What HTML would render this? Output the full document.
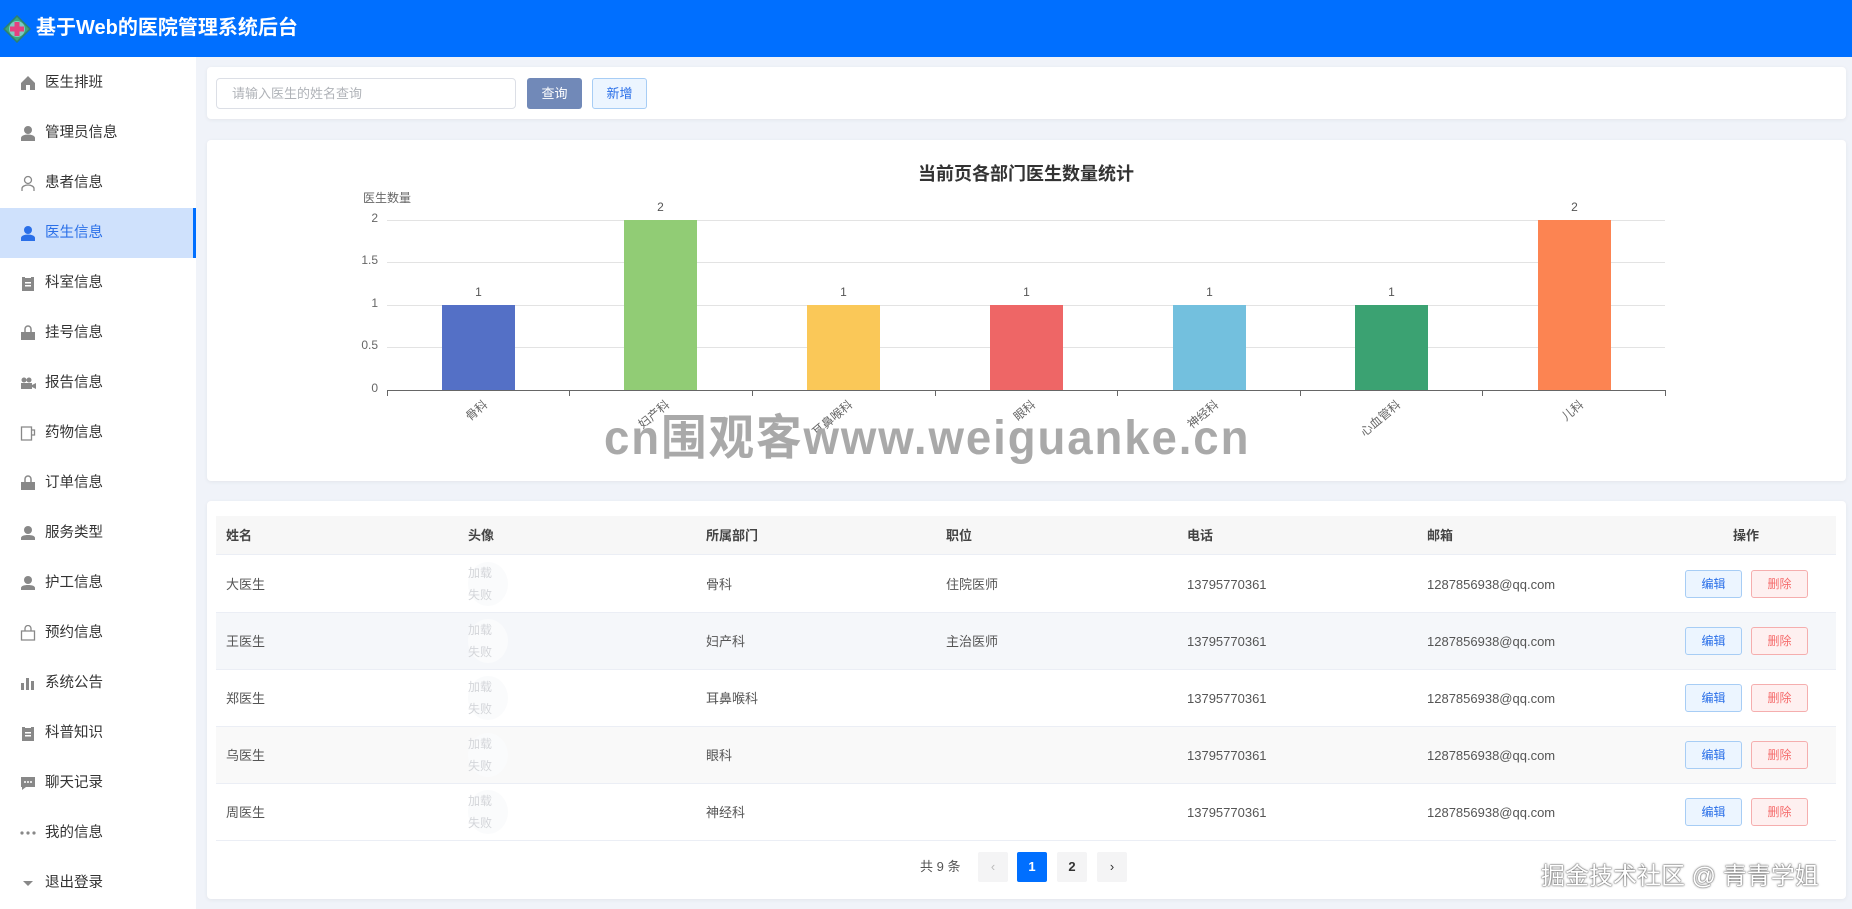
<!DOCTYPE html>
<html><head><meta charset="utf-8"><style>
*{margin:0;padding:0;box-sizing:border-box}
body{width:1852px;height:909px;overflow:hidden;background:#f0f3f9;font-family:"Liberation Sans","Noto Sans CJK SC",sans-serif;position:relative;color:#606266}
.a{position:absolute}
.hd{left:0;top:0;width:1852px;height:57px;background:#006fff}
.hd .t{left:36px;top:12px;color:#fff;font-size:20px;font-weight:bold;line-height:32px}
.sb{left:0;top:57px;width:196px;height:852px;background:#fff}
.mi{position:absolute;left:0;width:196px;height:50px;font-size:14.5px;color:#333;line-height:50px;padding-left:45px}
.mi svg{position:absolute;left:20px;top:17px}
.mi.on{background:#cfe1fc;color:#2a6fe8;border-right:3px solid #006fff}
.card{background:#fff;border-radius:4px;box-shadow:0 1px 4px rgba(0,0,0,.06)}
.btn{position:absolute;border-radius:3px;font-size:13px;text-align:center}
.gl{position:absolute;left:387px;width:1278px;height:1px;background:#e3e3e3}
.yl{position:absolute;width:30px;left:348px;text-align:right;font-size:12px;color:#666}
.bar{position:absolute;width:73px}
.bv{position:absolute;width:73px;text-align:center;font-size:12px;color:#555}
.xl{position:absolute;top:396px;font-size:12px;color:#666;transform:rotate(-40deg);transform-origin:right top;text-align:right;white-space:nowrap}
.th{position:absolute;top:516px;height:39px;line-height:39px;font-size:13px;color:#444;font-weight:bold}
.row{position:absolute;left:216px;width:1620px;height:57px;border-bottom:1px solid #ebeef5}
.c{position:absolute;font-size:13px;color:#555;line-height:57px;top:0}
.av{position:absolute;left:252px;top:6px;width:40px;height:44px;border-radius:50%;background:#fafbfc;color:#d4d6da;font-size:12px;line-height:22px}
.eb{position:absolute;top:14px;width:57px;height:28px;line-height:26px;font-size:12px;border-radius:3px;text-align:center}
.pg{position:absolute;top:852px;height:30px;width:30px;line-height:30px;text-align:center;font-size:13px;background:#f4f4f5;border-radius:2px;color:#333;font-weight:bold}
</style></head><body>
<div class="a hd">
<svg class="a" style="left:3px;top:15px" width="28" height="28" viewBox="0 0 28 28"><path d="M14 1 L27 14 L14 27 L1 14Z" fill="#3aa57a" stroke="#2d7f70" stroke-width="1.5"/><circle cx="14" cy="14" r="8" fill="#7ec9c4"/><path d="M11.5 7h5v4.5h4.5v5h-4.5v4.5h-5v-4.5h-4.5v-5h4.5z" fill="#e5407f"/></svg>
<div class="a t">基于Web的医院管理系统后台</div></div>
<div class="a sb">
<div class="mi" style="top:1px"><svg width="16" height="16" viewBox="0 0 16 16"><path d="M8 1L1 8v7h5v-5h4v5h5V8z" fill="#888"/></svg>医生排班</div>
<div class="mi" style="top:51px"><svg width="16" height="16" viewBox="0 0 16 16"><circle cx="8" cy="5" r="4" fill="#888"/><path d="M1 16v-3c0-2 3-3.5 7-3.5s7 1.5 7 3.5v3z" fill="#888"/></svg>管理员信息</div>
<div class="mi" style="top:101px"><svg width="16" height="16" viewBox="0 0 16 16" fill="none" stroke="#888" stroke-width="1.3"><circle cx="8" cy="5" r="3.5"/><path d="M2 16v-2.5c0-2 3-3.5 6-3.5s6 1.5 6 3.5V16"/></svg>患者信息</div>
<div class="mi on" style="top:151px"><svg width="16" height="16" viewBox="0 0 16 16"><circle cx="8" cy="5" r="4" fill="#2a6fe8"/><path d="M1 16v-3c0-2 3-3.5 7-3.5s7 1.5 7 3.5v3z" fill="#2a6fe8"/></svg>医生信息</div>
<div class="mi" style="top:201px"><svg width="16" height="16" viewBox="0 0 16 16"><path d="M2 2h12v14H2z" fill="#888"/><path d="M5 0h6v3H5z M5 7h6v1.5H5z M5 10h6v1.5H5z" fill="#fff"/></svg>科室信息</div>
<div class="mi" style="top:251px"><svg width="16" height="16" viewBox="0 0 16 16"><path d="M1 7h14v8H1z" fill="#888"/><path d="M5 7V4a3 3 0 0 1 6 0v3" stroke="#888" stroke-width="1.5" fill="none"/></svg>挂号信息</div>
<div class="mi" style="top:301px"><svg width="16" height="16" viewBox="0 0 16 16"><path d="M1 8h11v6H1zM12 10l4-2v6l-4-2z" fill="#888"/><circle cx="4" cy="5" r="2.5" fill="#888"/><circle cx="9" cy="5" r="2.5" fill="#888"/></svg>报告信息</div>
<div class="mi" style="top:351px"><svg width="16" height="16" viewBox="0 0 16 16" fill="none" stroke="#888" stroke-width="1.3"><path d="M1.5 2h10v13h-10zM11.5 5h3v5h-3"/></svg>药物信息</div>
<div class="mi" style="top:401px"><svg width="16" height="16" viewBox="0 0 16 16"><path d="M1 7h14v8H1z" fill="#888"/><path d="M5 7V4a3 3 0 0 1 6 0v3" stroke="#888" stroke-width="1.5" fill="none"/></svg>订单信息</div>
<div class="mi" style="top:451px"><svg width="16" height="16" viewBox="0 0 16 16"><circle cx="8" cy="5" r="4" fill="#888"/><path d="M1 15v-2c0-2 3-3 7-3s7 1 7 3v2z" fill="#888"/></svg>服务类型</div>
<div class="mi" style="top:501px"><svg width="16" height="16" viewBox="0 0 16 16"><circle cx="8" cy="5" r="4" fill="#888"/><path d="M1 15v-2c0-2 3-3 7-3s7 1 7 3v2z" fill="#888"/></svg>护工信息</div>
<div class="mi" style="top:551px"><svg width="16" height="16" viewBox="0 0 16 16" fill="none" stroke="#888" stroke-width="1.3"><path d="M1.5 6h13v9h-13zM5 6V3.5a3 3 0 0 1 6 0V6"/></svg>预约信息</div>
<div class="mi" style="top:601px"><svg width="16" height="16" viewBox="0 0 16 16" fill="#888"><path d="M1 8h3v7H1zM6 3h3v12H6zM11 6h3v9h-3z"/></svg>系统公告</div>
<div class="mi" style="top:651px"><svg width="16" height="16" viewBox="0 0 16 16"><path d="M2 2h12v14H2z" fill="#888"/><path d="M5 0h6v3H5z M5 7h6v1.5H5z M5 10h6v1.5H5z" fill="#fff"/></svg>科普知识</div>
<div class="mi" style="top:701px"><svg width="16" height="16" viewBox="0 0 16 16"><path d="M1 2h14v10H6l-4 3v-3H1z" fill="#888"/><circle cx="5" cy="7" r="1" fill="#fff"/><circle cx="8" cy="7" r="1" fill="#fff"/><circle cx="11" cy="7" r="1" fill="#fff"/></svg>聊天记录</div>
<div class="mi" style="top:751px"><svg width="16" height="16" viewBox="0 0 16 16" fill="#888"><circle cx="2" cy="8" r="1.6"/><circle cx="8" cy="8" r="1.6"/><circle cx="14" cy="8" r="1.6"/></svg>我的信息</div>
<div class="mi" style="top:801px"><svg width="16" height="16" viewBox="0 0 16 16" fill="#888"><path d="M3 6h10l-5 5z"/></svg>退出登录</div>
</div>

<div class="a card" style="left:207px;top:67px;width:1639px;height:52px"></div>
<div class="a" style="left:216px;top:78px;width:300px;height:31px;border:1px solid #dcdfe6;border-radius:4px;font-size:13px;color:#b0b3b8;line-height:29px;padding-left:15px">请输入医生的姓名查询</div>
<div class="btn" style="left:527px;top:78px;width:55px;height:31px;line-height:31px;background:#7189b8;color:#fff">查询</div>
<div class="btn" style="left:592px;top:78px;width:55px;height:31px;line-height:29px;background:#ecf5ff;border:1px solid #a7cdf5;color:#2a6fe8">新增</div>

<div class="a card" style="left:207px;top:140px;width:1639px;height:341px"></div>
<div class="a" style="left:826px;top:160px;width:400px;text-align:center;font-size:18px;font-weight:bold;color:#333">当前页各部门医生数量统计</div>
<div class="a" style="left:363px;top:189px;font-size:12px;color:#666">医生数量</div>
<div class="gl" style="top:220px"></div><div class="gl" style="top:262px"></div><div class="gl" style="top:305px"></div><div class="gl" style="top:347px"></div>
<div class="gl" style="top:390px;background:#666"></div>
<div class="yl" style="top:211px">2</div><div class="yl" style="top:253px">1.5</div><div class="yl" style="top:296px">1</div><div class="yl" style="top:338px">0.5</div><div class="yl" style="top:381px">0</div>
<div class="a" style="left:387px;top:390px;width:1px;height:6px;background:#666"></div>
<div class="a" style="left:569px;top:390px;width:1px;height:6px;background:#666"></div>
<div class="a" style="left:752px;top:390px;width:1px;height:6px;background:#666"></div>
<div class="a" style="left:935px;top:390px;width:1px;height:6px;background:#666"></div>
<div class="a" style="left:1117px;top:390px;width:1px;height:6px;background:#666"></div>
<div class="a" style="left:1300px;top:390px;width:1px;height:6px;background:#666"></div>
<div class="a" style="left:1482px;top:390px;width:1px;height:6px;background:#666"></div>
<div class="a" style="left:1665px;top:390px;width:1px;height:6px;background:#666"></div>
<div class="bar" style="left:442px;top:305px;height:85px;background:#5470c6"></div>
<div class="bar" style="left:624px;top:220px;height:170px;background:#91cc75"></div>
<div class="bar" style="left:807px;top:305px;height:85px;background:#fac858"></div>
<div class="bar" style="left:990px;top:305px;height:85px;background:#ee6666"></div>
<div class="bar" style="left:1173px;top:305px;height:85px;background:#73c0de"></div>
<div class="bar" style="left:1355px;top:305px;height:85px;background:#3ba272"></div>
<div class="bar" style="left:1538px;top:220px;height:170px;background:#fc8452"></div>
<div class="bv" style="left:442px;top:285px">1</div><div class="bv" style="left:624px;top:200px">2</div><div class="bv" style="left:807px;top:285px">1</div><div class="bv" style="left:990px;top:285px">1</div><div class="bv" style="left:1173px;top:285px">1</div><div class="bv" style="left:1355px;top:285px">1</div><div class="bv" style="left:1538px;top:200px">2</div>
<div class="xl" style="right:1372px">骨科</div>
<div class="xl" style="right:1190px">妇产科</div>
<div class="xl" style="right:1007px">耳鼻喉科</div>
<div class="xl" style="right:824px">眼科</div>
<div class="xl" style="right:641px">神经科</div>
<div class="xl" style="right:459px">心血管科</div>
<div class="xl" style="right:276px">儿科</div>
<div class="a" style="left:604px;top:414px;font-size:48px;line-height:50px;font-weight:bold;color:#a9a9a9;letter-spacing:2px;transform:scaleX(0.95);transform-origin:left top">cn围观客www.weiguanke.cn</div>

<div class="a card" style="left:207px;top:501px;width:1639px;height:398px"></div>
<div class="a" style="left:216px;top:516px;width:1620px;height:39px;background:#f7f7f7;border-bottom:1px solid #ebeef5"></div>
<div class="th" style="left:226px">姓名</div><div class="th" style="left:468px">头像</div><div class="th" style="left:706px">所属部门</div><div class="th" style="left:946px">职位</div><div class="th" style="left:1187px">电话</div><div class="th" style="left:1427px">邮箱</div><div class="th" style="left:1733px">操作</div>

<div class="row" style="top:556px;background:#fff"><div class="c" style="left:10px">大医生</div><div class="av">加载<br>失败</div><div class="c" style="left:490px">骨科</div><div class="c" style="left:730px">住院医师</div><div class="c" style="left:971px">13795770361</div><div class="c" style="left:1211px">1287856938@qq.com</div><div class="eb" style="left:1469px;background:#ecf5ff;border:1px solid #a7cdf5;color:#2a6fe8">编辑</div><div class="eb" style="left:1535px;background:#fef0f0;border:1px solid #f5aeae;color:#f56c6c">删除</div></div>
<div class="row" style="top:613px;background:#f5f7fa"><div class="c" style="left:10px">王医生</div><div class="av">加载<br>失败</div><div class="c" style="left:490px">妇产科</div><div class="c" style="left:730px">主治医师</div><div class="c" style="left:971px">13795770361</div><div class="c" style="left:1211px">1287856938@qq.com</div><div class="eb" style="left:1469px;background:#ecf5ff;border:1px solid #a7cdf5;color:#2a6fe8">编辑</div><div class="eb" style="left:1535px;background:#fef0f0;border:1px solid #f5aeae;color:#f56c6c">删除</div></div>
<div class="row" style="top:670px;background:#fff"><div class="c" style="left:10px">郑医生</div><div class="av">加载<br>失败</div><div class="c" style="left:490px">耳鼻喉科</div><div class="c" style="left:971px">13795770361</div><div class="c" style="left:1211px">1287856938@qq.com</div><div class="eb" style="left:1469px;background:#ecf5ff;border:1px solid #a7cdf5;color:#2a6fe8">编辑</div><div class="eb" style="left:1535px;background:#fef0f0;border:1px solid #f5aeae;color:#f56c6c">删除</div></div>
<div class="row" style="top:727px;background:#f9f9f9"><div class="c" style="left:10px">乌医生</div><div class="av">加载<br>失败</div><div class="c" style="left:490px">眼科</div><div class="c" style="left:971px">13795770361</div><div class="c" style="left:1211px">1287856938@qq.com</div><div class="eb" style="left:1469px;background:#ecf5ff;border:1px solid #a7cdf5;color:#2a6fe8">编辑</div><div class="eb" style="left:1535px;background:#fef0f0;border:1px solid #f5aeae;color:#f56c6c">删除</div></div>
<div class="row" style="top:784px;background:#fff"><div class="c" style="left:10px">周医生</div><div class="av">加载<br>失败</div><div class="c" style="left:490px">神经科</div><div class="c" style="left:971px">13795770361</div><div class="c" style="left:1211px">1287856938@qq.com</div><div class="eb" style="left:1469px;background:#ecf5ff;border:1px solid #a7cdf5;color:#2a6fe8">编辑</div><div class="eb" style="left:1535px;background:#fef0f0;border:1px solid #f5aeae;color:#f56c6c">删除</div></div>

<div class="a" style="left:920px;top:852px;line-height:30px;font-size:13px;color:#555">共 9 条</div>
<div class="pg" style="left:978px;color:#bbb;font-weight:normal">‹</div>
<div class="pg" style="left:1017px;background:#006fff;color:#fff">1</div>
<div class="pg" style="left:1057px">2</div>
<div class="pg" style="left:1097px;font-weight:normal">›</div>
<div class="a" style="left:1541px;top:856px;font-size:24px;color:#fff;text-shadow:0 0 2px #555,0 0 1px #333">掘金技术社区 @ 青青学姐</div>
</body></html>
